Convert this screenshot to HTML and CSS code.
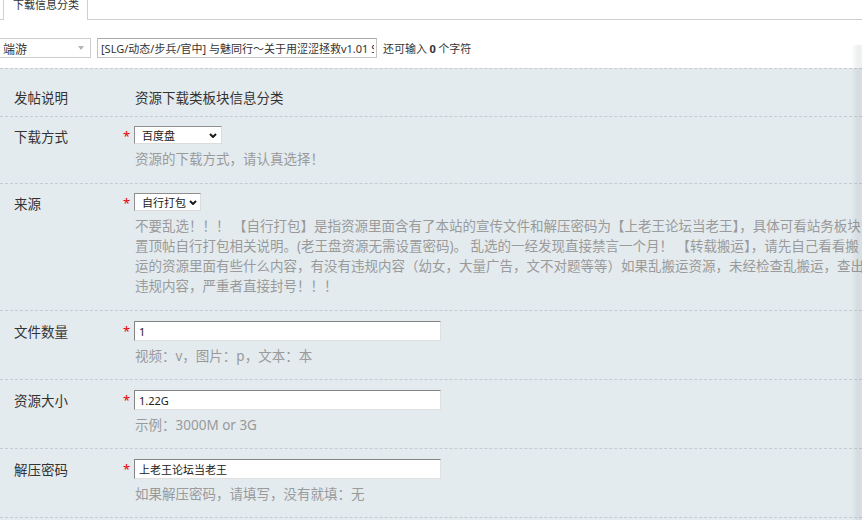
FILE: index.html
```html
<!DOCTYPE html>
<html lang="zh-CN">
<head>
<meta charset="utf-8">
<title>下载信息分类</title>
<link rel="stylesheet" href="styles.css">
</head>
<body>
<div class="tabs"><div class="tab">下载信息分类</div></div>

<div class="topbar">
  <div class="sel-plain"><span>端游</span><svg class="tri" width="6" height="4" viewBox="0 0 6 4"><path d="M0 0 L6 0 L3 4 Z" fill="#b5b5b5"/></svg></div>
  <input class="title" type="text" value="[SLG/动态/步兵/官中] 与魅同行～关于用涩涩拯救v1.01 STEAM官方中文版">
  <span class="count">还可输入 <b>0</b> 个字符</span>
</div>

<div class="panel">
  <div class="row first">
    <div class="th">发帖说明</div>
    <div class="req"></div>
    <div class="td"><div class="value">资源下载类板块信息分类</div></div>
  </div>

  <div class="row sel-row">
    <div class="th">下载方式</div>
    <div class="req">*</div>
    <div class="td">
      <div class="sel sel-a"><span>百度盘</span><svg class="chev" width="8" height="5" viewBox="0 0 8 5"><path d="M1 1 L4 4 L7 1" fill="none" stroke="#1a1a1a" stroke-width="2"/></svg></div>
      <div class="hint">资源的下载方式，请认真选择！</div>
    </div>
  </div>

  <div class="row sel-row">
    <div class="th">来源</div>
    <div class="req">*</div>
    <div class="td">
      <div class="sel sel-b"><span>自行打包</span><svg class="chev" width="8" height="5" viewBox="0 0 8 5"><path d="M1 1 L4 4 L7 1" fill="none" stroke="#1a1a1a" stroke-width="2"/></svg></div>
      <div class="hint long">
        <span class="line">不要乱选！！！ 【自行打包】是指资源里面含有了本站的宣传文件和解压密码为【上老王论坛当老王】，具体可看站务板块</span>
        <span class="line">置顶帖自行打包相关说明。(老王盘资源无需设置密码)。 乱选的一经发现直接禁言一个月！ 【转载搬运】，请先自己看看搬</span>
        <span class="line">运的资源里面有些什么内容，有没有违规内容（幼女，大量广告，文不对题等等）如果乱搬运资源，未经检查乱搬运，查出</span>
        <span class="line">违规内容，严重者直接封号！！！</span>
      </div>
    </div>
  </div>

  <div class="row inp-row">
    <div class="th">文件数量</div>
    <div class="req">*</div>
    <div class="td">
      <input class="txt" type="text" value="1">
      <div class="hint">视频：v，图片：p，文本：本</div>
    </div>
  </div>

  <div class="row inp-row">
    <div class="th">资源大小</div>
    <div class="req">*</div>
    <div class="td">
      <input class="txt" type="text" value="1.22G">
      <div class="hint">示例：3000M or 3G</div>
    </div>
  </div>

  <div class="row inp-row">
    <div class="th">解压密码</div>
    <div class="req">*</div>
    <div class="td">
      <input class="txt" type="text" value="上老王论坛当老王">
      <div class="hint">如果解压密码，请填写，没有就填：无</div>
    </div>
  </div>
</div>

<div class="edge-shadow"></div>
</body>
</html>
```

FILE: styles.css
```css
html, body {
  margin: 0;
  padding: 0;
  overflow: hidden;
  background: #fff;
}

body {
  font-family: "Noto Sans", "Noto Sans CJK SC", sans-serif;
  color: #333;
  width: 862px;
  height: 520px;
  position: relative;
}

/* tab strip */
.tabs {
  display: flex;
  align-items: flex-start;
  height: 19px;
  padding-left: 3px;
  border-bottom: 1px solid #cfcfcf;
}

.tab {
  box-sizing: border-box;
  height: 20px;
  padding: 0 8px 0 9px;
  border-left: 1px solid #cfcfcf;
  border-right: 1px solid #cfcfcf;
  background: #fff;
  font-family: "Noto Sans CJK SC", sans-serif;
  font-size: 11px;
  line-height: 9px;
  color: #333;
}

/* subject bar */
.topbar {
  display: flex;
  align-items: center;
  height: 20px;
  margin-top: 18px;
}

.sel-plain {
  box-sizing: border-box;
  display: flex;
  align-items: center;
  width: 93px;
  height: 20px;
  margin-left: -2px;
  padding-left: 4px;
  border: 1px solid #cdcdcd;
  background: #fff;
  font-family: "Noto Sans CJK SC", sans-serif;
  font-size: 12px;
  color: #333;
}

.sel-plain .tri {
  margin-left: auto;
  margin-right: 6px;
}

.title {
  box-sizing: border-box;
  width: 280px;
  height: 20px;
  margin: 0 0 0 6px;
  padding: 0 2px 0 3px;
  border: 1px solid #c4c4c4;
  border-top-color: #ababab;
  background: #fff;
  font-family: "Noto Sans", "Noto Sans CJK SC", sans-serif;
  font-size: 11px;
  color: #333;
  outline: none;
}

.count {
  margin-left: 6px;
  font-family: "Noto Sans CJK SC", sans-serif;
  font-size: 11px;
  color: #333;
  white-space: nowrap;
}

.count b {
  font-family: "Noto Sans", sans-serif;
  font-weight: 700;
}

/* form panel */
.panel {
  margin-top: 10px;
  background: #e4ebef;
  border-top: 1px dashed #c4ccd1;
  height: 460px;
}

.row {
  display: flex;
  border-bottom: 1px dashed #c4ccd1;
  padding: 9px 0 14px;
}

.row.first {
  padding: 18px 0 9px;
}

.row.inp-row {
  padding: 10px 0 13px;
}

.th {
  box-sizing: border-box;
  width: 123px;
  padding-left: 14px;
  font-family: "Noto Sans CJK SC", sans-serif;
  font-size: 13.5px;
  line-height: 20px;
  color: #333;
  flex: none;
}

.req {
  width: 11px;
  flex: none;
  font-family: "Noto Sans", sans-serif;
  font-size: 13px;
  line-height: 20px;
  color: #e60000;
}

.td {
  flex: 1;
  min-width: 0;
}

.value {
  padding-left: 1px;
  font-family: "Noto Sans CJK SC", sans-serif;
  font-size: 13.5px;
  line-height: 20px;
  color: #333;
}

.sel {
  box-sizing: border-box;
  display: flex;
  align-items: center;
  height: 18px;
  padding-left: 7px;
  border: 1px solid;
  border-color: #8f8f8f #dcdcdc #dcdcdc #8f8f8f;
  background: #fff;
  font-family: "Noto Sans CJK SC", sans-serif;
  font-size: 11px;
  color: #222;
}

.sel-a { width: 88px; }
.sel-b { width: 67px; }

.sel .chev {
  margin-left: auto;
  margin-right: 4px;
}

.sel-b .chev {
  margin-right: 3px;
}

.txt {
  box-sizing: border-box;
  display: block;
  width: 307px;
  height: 20px;
  margin: 0;
  padding: 0 4px;
  border: 1px solid;
  border-color: #848484 #e0e0e0 #e0e0e0 #848484;
  background: #fff;
  font-family: "Noto Sans", "Noto Sans CJK SC", sans-serif;
  font-size: 11px;
  color: #222;
  outline: none;
}

.hint {
  margin-top: 5px;
  padding-left: 1px;
  font-family: "Noto Sans", "Noto Sans CJK SC", sans-serif;
  font-size: 13.5px;
  line-height: 20px;
  color: #9a9a9a;
  white-space: nowrap;
}

.hint .line {
  display: block;
}

.edge-shadow {
  position: absolute;
  top: 45px;
  right: 0;
  bottom: 0;
  width: 11px;
  background: linear-gradient(to right, rgba(70, 90, 100, 0) 0%, rgba(70, 90, 100, 0.10) 65%, rgba(70, 90, 100, 0.08) 100%);
  pointer-events: none;
}
```
